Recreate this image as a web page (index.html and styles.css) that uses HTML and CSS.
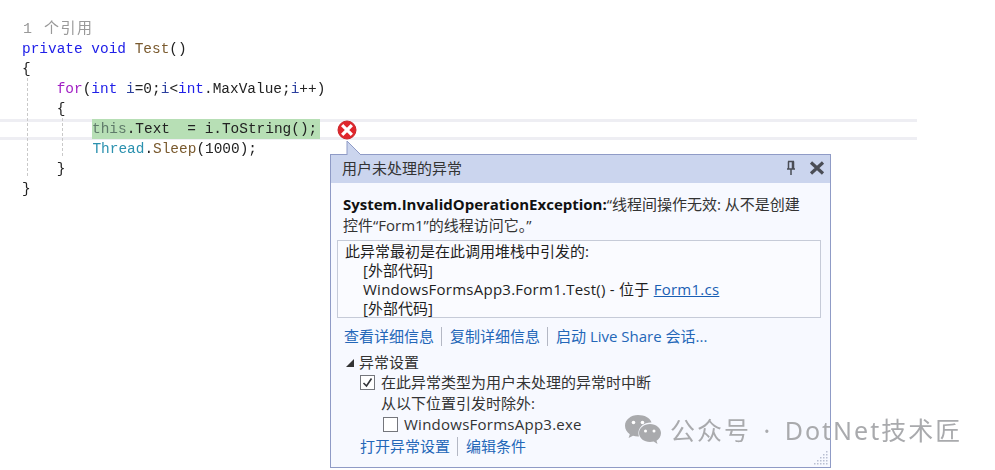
FILE: index.html
```html
<!DOCTYPE html>
<html lang="zh">
<head>
<meta charset="utf-8">
<title>用户未处理的异常</title>
<link rel="stylesheet" href="styles.css">
</head>
<body>
<main class="stage">
  <section class="editor">
    <div class="guide guide-outer"></div>
    <div class="guide guide-inner"></div>
    <div class="line lens">1 个引用</div>
    <div class="line"><span class="kw">private</span> <span class="kw">void</span> <span class="fn">Test</span>()</div>
    <div class="line">{</div>
    <div class="line i1"><span class="ctl">for</span>(<span class="kw">int</span> <span class="var">i</span>=0;<span class="var">i</span>&lt;<span class="kw">int</span>.MaxValue;<span class="var">i</span>++)</div>
    <div class="line i1">{</div>
    <div class="line current"><span class="hl"><span class="this">this</span>.Text  = i.ToString();</span></div>
    <div class="line i2"><span class="type">Thread</span>.<span class="fn">Sleep</span>(1000);</div>
    <div class="line i1">}</div>
    <div class="line">}</div>
  </section>

  <svg class="err" viewBox="0 0 20 20" width="20" height="20" aria-hidden="true">
    <circle cx="10" cy="10" r="9" fill="#e0252b" stroke="#c9252a" stroke-width="1"/>
    <path d="M6.3 6.3l7.4 7.4M13.7 6.3l-7.4 7.4" stroke="#fff" stroke-width="3.2" stroke-linecap="square" fill="none"/>
  </svg>

  <aside class="popup">
    <svg class="tail" viewBox="0 0 18 16" width="18" height="16" aria-hidden="true">
      <path d="M1 15V1L15 15" fill="#cbd5ee" stroke="#8f9bc6" stroke-width="1"/>
    </svg>
    <header class="popup-head">
      <span class="popup-title">用户未处理的异常</span>
      <svg class="pin" viewBox="0 0 12 16" width="12" height="16" aria-hidden="true">
        <path d="M3 1.500h6M3.500 1.500v7M7.500 1.500v7M8.500 1.500v7M2 9h8M6 9v6" stroke="#4a4d55" stroke-width="1.500" fill="none"/>
      </svg>
      <svg class="close" viewBox="0 0 16 14" width="16" height="14" aria-hidden="true">
        <path d="M2 1.500l12 11M14 1.500l-12 11" stroke="#4a4d55" stroke-width="3.200" fill="none"/>
      </svg>
    </header>
    <div class="popup-body">
      <p class="msg"><b>System.InvalidOperationException:</b>“线程间操作无效: 从不是创建<br>控件“Form1”的线程访问它。”</p>
      <div class="stack">
        <div>此异常最初是在此调用堆栈中引发的:</div>
        <div class="ind">[外部代码]</div>
        <div class="ind latin">WindowsFormsApp3.Form1.Test() - 位于 <a class="file">Form1.cs</a></div>
        <div class="ind">[外部代码]</div>
      </div>
      <nav class="links l1">
        <a>查看详细信息</a><a>复制详细信息</a><a>启动 Live Share 会话...</a>
      </nav>
      <div class="settings">
        <div class="set-head"><i class="tri"></i>异常设置</div>
        <label class="row r1">
          <svg class="cb" viewBox="0 0 15 15" width="15" height="15" aria-hidden="true">
            <rect x="0.5" y="0.5" width="14" height="14" fill="#fff" stroke="#74767c"/>
            <path d="M3.500 8l3 3 5-7.500" stroke="#33353a" stroke-width="1.600" fill="none"/>
          </svg>
          在此异常类型为用户未处理的异常时中断
        </label>
        <div class="row r2">从以下位置引发时除外:</div>
        <label class="row r3 latin">
          <svg class="cb" viewBox="0 0 15 15" width="15" height="15" aria-hidden="true">
            <rect x="0.5" y="0.5" width="14" height="14" fill="#fff" stroke="#74767c"/>
          </svg>
          WindowsFormsApp3.exe
        </label>
        <nav class="links l2"><a>打开异常设置</a><a>编辑条件</a></nav>
      </div>
    </div>
    <svg class="grip" viewBox="0 0 14 14" width="14" height="14" aria-hidden="true">
      <g fill="#b9bfd2">
        <rect x="12" y="0" width="1.500" height="1.500"/>
        <rect x="9" y="3" width="1.500" height="1.500"/><rect x="12" y="3" width="1.500" height="1.500"/>
        <rect x="6" y="6" width="1.500" height="1.500"/><rect x="9" y="6" width="1.500" height="1.500"/><rect x="12" y="6" width="1.500" height="1.500"/>
        <rect x="3" y="9" width="1.500" height="1.500"/><rect x="6" y="9" width="1.500" height="1.500"/><rect x="9" y="9" width="1.500" height="1.500"/><rect x="12" y="9" width="1.500" height="1.500"/>
        <rect x="0" y="12" width="1.500" height="1.500"/><rect x="3" y="12" width="1.500" height="1.500"/><rect x="6" y="12" width="1.500" height="1.500"/><rect x="9" y="12" width="1.500" height="1.500"/><rect x="12" y="12" width="1.500" height="1.500"/>
      </g>
    </svg>
  </aside>

  <div class="mark">
    <svg viewBox="0 0 38 32" width="38" height="32" aria-hidden="true">
      <path d="M14 1C6.800 1 1 5.800 1 11.800c0 3.400 1.900 6.400 4.800 8.400L4.600 24l4.400-2.200c1.500.4 3.200.7 5 .7h1c-.4-1.100-.6-2.200-.6-3.400 0-5.900 5.500-10.600 12.300-10.600h.8C26 3.700 20.500 1 14 1z" fill="#a9aaad"/>
      <path d="M37 19c0-5-5-9-11-9s-11 4-11 9 5 9 11 9c1.300 0 2.500-.2 3.700-.5L33.500 30l-1-3.300c2.700-1.700 4.500-4.500 4.500-7.700z" fill="#a9aaad"/>
      <g fill="#fff">
        <circle cx="9.500" cy="8.500" r="1.800"/><circle cx="18.500" cy="8.500" r="1.800"/>
        <circle cx="21.500" cy="17" r="1.500"/><circle cx="30" cy="17" r="1.500"/>
      </g>
    </svg>
    <span>公众号 · DotNet技术匠</span>
  </div>
</main>
</body>
</html>
```
FILE: styles.css
```css
* { box-sizing: border-box; }
html, body { margin: 0; padding: 0; background: #fff; }
.stage {
  position: relative;
  width: 995px;
  height: 470px;
  overflow: hidden;
  filter: blur(0.35px);
}

/* code editor */
.editor {
  position: relative;
  padding: 19px 0 0 22px;
  font: 14.45px/20px "Liberation Mono", "Noto Sans CJK SC", monospace;
  color: #222;
}
.line { height: 20px; white-space: pre; }
.lens {
  font: 15px/22px "Liberation Mono", "Noto Sans CJK SC", monospace;
  color: #999;
  letter-spacing: 1.5px;
  padding-left: 1px;
}
.i1 { padding-left: 34.7px; }
.i2 { padding-left: 70.4px; }
.current {
  margin: 0 0 -1px -22px;
  padding-left: 22px;
  width: 917px;
  height: 21px;
  border-top: 3px solid #eeeef3;
  border-bottom: 3px solid #eeeef3;
  line-height: 18px;
}
.hl {
  display: inline-block;
  margin-left: 70px;
  margin-top: -3px;
  width: 228px;
  height: 20px;
  line-height: 20px;
  background: #b7dfb5;
  vertical-align: top;
}
.kw { color: #2020e8; }
.fn { color: #7a5a2e; }
.ctl { color: #a11fc4; }
.var { color: #2b3f9e; }
.this { color: #5f7a6a; }
.type { color: #2b91af; }
.guide {
  position: absolute;
  width: 0;
  border-left: 1px dashed #c9c9c9;
}
.guide-outer { left: 27px; top: 78px; height: 98px; }
.guide-inner { left: 62px; top: 118px; height: 38px; }

/* error marker */
.err { position: absolute; left: 337px; top: 120px; }

/* exception popup */
.popup {
  position: absolute;
  left: 330px;
  top: 154px;
  width: 501px;
  height: 314px;
  background: #f7f9ff;
  border: 1px solid #8f9bc6;
  font: 15px/19px "Open Sans", "Noto Sans CJK SC", sans-serif;
  color: #1e1e1e;
}
.tail { position: absolute; left: 15px; top: -15px; }
.popup-head {
  display: flex;
  align-items: center;
  height: 28px;
  padding: 0 5px 2px 11px;
  background: #cbd5ee;
}
.popup-title { flex: 1; color: #333; }
.pin { margin-right: 12px; }
.popup-body { padding: 11px 9px 0 6px; }
.msg {
  margin: 0;
  padding: 0 6px;
  height: 46px;
  line-height: 21px;
  color: #333;
}
.msg b { color: #111; }
.stack {
  height: 78px;
  padding: 1px 7px;
  border: 1px solid #c6cbd8;
  background: #fafbff;
}
.ind { padding-left: 18px; }
.latin { letter-spacing: 0.25px; }
.file { color: #1a5fb4; text-decoration: underline; }
.links { display: flex; color: #2467b8; }
.links a { padding-right: 7px; margin-right: 8px; border-right: 1px solid #b4b8c4; height: 19px; }
.links a:last-child { border-right: 0; padding-right: 0; margin-right: 0; }
.l1 { margin: 9px 0 0 7px; }
.settings { padding-left: 7px; margin-top: 7px; }
.set-head { display: flex; align-items: center; color: #333; }
.tri {
  width: 0;
  height: 0;
  margin: 0 5px 0 2px;
  border-style: solid;
  border-width: 0 0 8px 8px;
  border-color: transparent transparent #333 transparent;
}
.row { display: flex; align-items: center; height: 21px; color: #333; }
.r1 { padding-left: 16px; gap: 6px; }
.r2 { padding-left: 37px; }
.r3 { padding-left: 39px; gap: 6px; height: 20px; }
.l2 { margin: 3px 0 0 16px; }
.grip { position: absolute; right: 2px; bottom: 2px; }

/* watermark */
.mark {
  position: absolute;
  left: 624px;
  top: 414px;
  display: flex;
  align-items: center;
  gap: 8px;
  font: 25px/32px "Noto Sans", "Noto Sans CJK SC", sans-serif;
  color: #a9aaad;
  letter-spacing: 2px;
  word-spacing: 4px;
  white-space: nowrap;
}
```
